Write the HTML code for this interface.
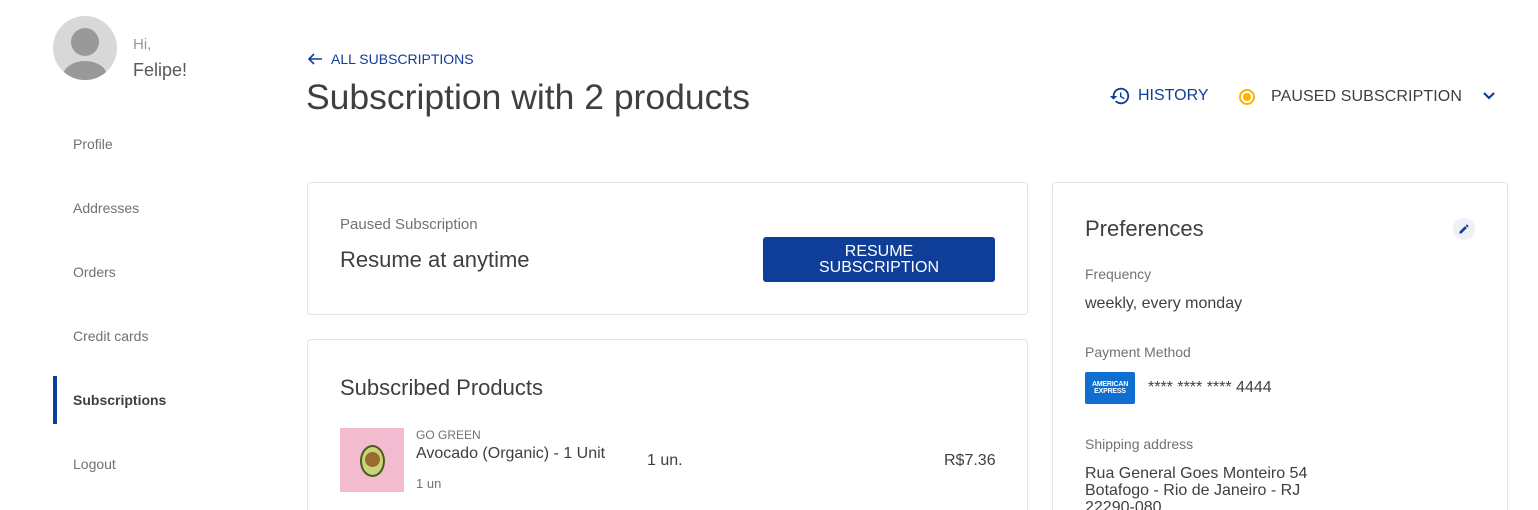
<!DOCTYPE html>
<html><head><meta charset="utf-8"><style>
*{box-sizing:border-box;margin:0;padding:0}
html,body{width:1538px;height:510px;overflow:hidden}
body{background:#fff;font-family:"Liberation Sans",Arial,sans-serif;color:#3f3f40;position:relative}
.a{position:absolute;white-space:nowrap}
.nav{font-size:14px;color:#727273;left:73px}
.card{position:absolute;border:1px solid #e3e4e6;border-radius:4px;background:#fff}
.lbl{font-size:14px;color:#727273}
</style></head><body>
<div class="a" style="left:53px;top:16px;width:64px;height:64px;border-radius:50%;background:#d8d8d8;overflow:hidden">
<div style="position:absolute;left:18px;top:12px;width:28px;height:28px;border-radius:50%;background:#999"></div>
<div style="position:absolute;left:10px;top:45px;width:44px;height:30px;border-radius:50%;background:#999"></div></div>
<div class="a" style="left:133px;top:36px;font-size:15px;color:#979899">Hi,</div>
<div class="a" style="left:133px;top:60px;font-size:18px;color:#585959">Felipe!</div>
<div class="a nav" style="top:136px">Profile</div>
<div class="a nav" style="top:200px">Addresses</div>
<div class="a nav" style="top:264px">Orders</div>
<div class="a nav" style="top:328px">Credit cards</div>
<div class="a" style="left:53px;top:376px;width:4px;height:48px;background:#0f3e99"></div>
<div class="a nav" style="top:392px;color:#3f3f40;font-weight:bold">Subscriptions</div>
<div class="a nav" style="top:456px">Logout</div>

<svg class="a" style="left:307px;top:52px" width="16" height="14" viewBox="0 0 16 14"><path d="M15 7H2M7 2L2 7l5 5" stroke="#0f3e99" stroke-width="1.6" fill="none"/></svg>
<div class="a" style="left:331px;top:51px;font-size:14px;color:#0f3e99">ALL SUBSCRIPTIONS</div>
<div class="a" style="left:306px;top:77px;font-size:35.5px;color:#3f3f40">Subscription with 2 products</div>

<svg class="a" style="left:1109px;top:85px" width="22" height="22" viewBox="0 0 24 24"><path fill="#0f3e99" d="M13 3a9 9 0 0 0-9 9H1l3.9 3.9L9 12H6a7 7 0 1 1 2 4.9l-1.4 1.4A9 9 0 1 0 13 3zm-1 5v5l4.3 2.5.7-1.2-3.5-2.1V8z"/></svg>
<div class="a" style="left:1138px;top:87px;font-size:16px;color:#0f3e99">HISTORY</div>
<div class="a" style="left:1239px;top:89px;width:16px;height:16px;border-radius:50%;border:2px solid #ffb100"><div style="margin:2px;width:8px;height:8px;border-radius:50%;background:#ffb100"></div></div>
<div class="a" style="left:1271px;top:88px;font-size:16px;color:#3f3f40;letter-spacing:0.1px">PAUSED SUBSCRIPTION</div>
<svg class="a" style="left:1482px;top:91px" width="14" height="10" viewBox="0 0 14 10"><path d="M2 2l5 5 5-5" stroke="#0f3e99" stroke-width="2.2" fill="none"/></svg>

<div class="card" style="left:307px;top:182px;width:721px;height:133px"></div>
<div class="a lbl" style="left:340px;top:216px;font-size:15px">Paused Subscription</div>
<div class="a" style="left:340px;top:247px;font-size:22px">Resume at anytime</div>
<div class="a" style="left:763px;top:237px;width:232px;height:45px;background:#0f3e99;border-radius:3px;color:#fff;font-size:16px;text-align:center;line-height:16px;padding-top:7px">RESUME<br>SUBSCRIPTION</div>

<div class="card" style="left:307px;top:339px;width:721px;height:200px"></div>
<div class="a" style="left:340px;top:375px;font-size:22px">Subscribed Products</div>
<div class="a" style="left:340px;top:428px;width:64px;height:64px;background:#f2bbd0">
<div style="position:absolute;left:20px;top:17px;width:25px;height:32px;border-radius:50%;background:#4d5a1e"></div>
<div style="position:absolute;left:22px;top:19px;width:21px;height:28px;border-radius:50%;background:#c9d37a"></div>
<div style="position:absolute;left:25px;top:24px;width:15px;height:15px;border-radius:50%;background:#9a6b2f"></div></div>
<div class="a" style="left:416px;top:428px;font-size:12px;color:#727273">GO GREEN</div>
<div class="a" style="left:416px;top:445px;font-size:16px">Avocado (Organic) - 1 Unit</div>
<div class="a" style="left:416px;top:476px;font-size:13px;color:#727273">1 un</div>
<div class="a" style="left:647px;top:452px;font-size:16px">1 un.</div>
<div class="a" style="left:944px;top:452px;font-size:16px">R$7.36</div>

<div class="card" style="left:1052px;top:182px;width:456px;height:360px"></div>
<div class="a" style="left:1085px;top:216px;font-size:22px">Preferences</div>
<div class="a" style="left:1453px;top:218px;width:22px;height:22px;border-radius:50%;background:#edf1f7"><svg style="position:absolute;left:5px;top:5px" width="12" height="12" viewBox="0 0 24 24"><path fill="#0f3e99" d="M3 17.2V21h3.8l11-11-3.8-3.8zM20.7 7a1 1 0 0 0 0-1.4l-2.3-2.3a1 1 0 0 0-1.4 0l-1.8 1.8 3.8 3.8z"/></svg></div>
<div class="a lbl" style="left:1085px;top:266px">Frequency</div>
<div class="a" style="left:1085px;top:295px;font-size:16px">weekly, every monday</div>
<div class="a lbl" style="left:1085px;top:344px">Payment Method</div>
<div class="a" style="left:1085px;top:372px;width:50px;height:32px;background:#0e6fd0;border-radius:2px;color:#fff;font-size:7px;font-weight:bold;text-align:center;line-height:7px;padding-top:9px;letter-spacing:-0.2px">AMERICAN<br>EXPRESS</div>
<div class="a" style="left:1148px;top:379px;font-size:16px">**** **** **** 4444</div>
<div class="a lbl" style="left:1085px;top:436px">Shipping address</div>
<div class="a" style="left:1085px;top:465px;font-size:16px;line-height:17px">Rua General Goes Monteiro 54<br>Botafogo - Rio de Janeiro - RJ<br>22290-080</div>
</body></html>
